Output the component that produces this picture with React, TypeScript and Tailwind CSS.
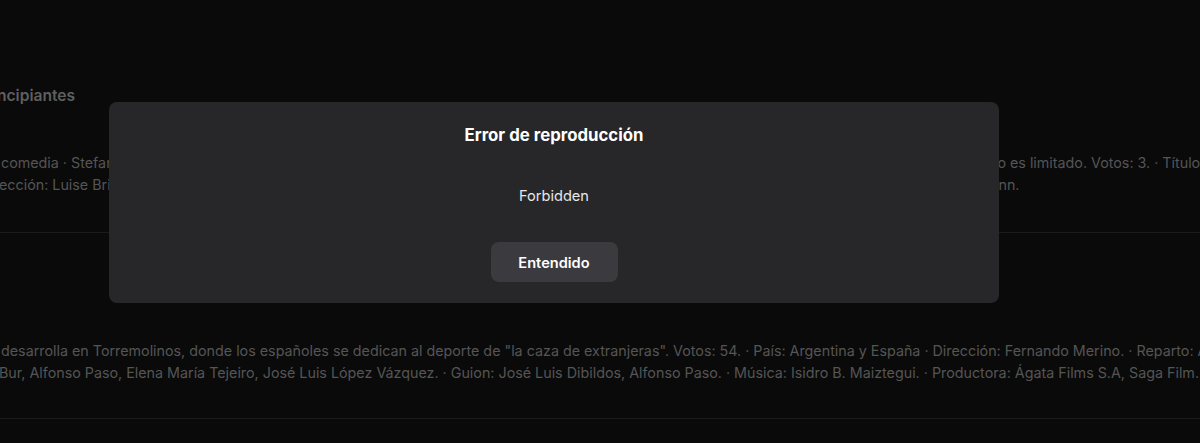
export default function App() {
  return (
    <div className="relative h-[443px] w-[1200px] overflow-hidden bg-[#0a0a0a] font-['Inter','Liberation_Sans',sans-serif]">
      {/* contenido de fondo, atenuado por el modal */}
      <div className="flex flex-col">
        <div className="border-b border-[#1b1b1b] pt-[84px] pb-[36px]">
          <h3 className="-ml-[3px] text-[15.6px] leading-6 font-semibold text-[#5f5f5f] whitespace-nowrap">
            ncipiantes
          </h3>
          <div className="mt-[44px] text-[14.3px] leading-[22px] text-[#555555] whitespace-nowrap">
            <p className="ml-[1px]">
              comedia · Stefanie Stappenbeck, Nele Kiper, Marc Benjamin. · Sinopsis: Un grupo de adultos decide aprender a nadar en la piscina local y el cupo no es limitado. Votos: 3. · Título original: Die Anfänger
            </p>
            <p className="-ml-[1px]">
              ección: Luise Brinkmann. · Guion: Luise Brinkmann, Roberto Krause. · Fotografía: Carol Burandt von Kameke. · Reparto: Ulrike Kriener, Luise Brinkmann.
            </p>
          </div>
        </div>
        <div className="border-b border-[#1b1b1b] pt-[107px] pb-[34px]">
          <div className="text-[14.3px] leading-[22px] text-[#555555] whitespace-nowrap">
            <p className="ml-[1px]">
              desarrolla en Torremolinos, donde los españoles se dedican al deporte de "la caza de extranjeras". Votos: 54. · País: Argentina y España · Dirección: Fernando Merino. · Reparto: Antonio Ozores
            </p>
            <p className="-ml-[1px]">
              Bur, Alfonso Paso, Elena María Tejeiro, José Luis López Vázquez. · Guion: José Luis Dibildos, Alfonso Paso. · Música: Isidro B. Maiztegui. · Productora: Ágata Films S.A, Saga Film.
            </p>
          </div>
        </div>
      </div>

      {/* modal de error */}
      <div className="absolute inset-0 flex items-start justify-start pt-[102px] pl-[109px]">
        <div className="flex h-[201px] w-[890px] flex-col items-center rounded-lg bg-[#27272a] pt-[21px] pb-[21px]">
          <h2 className="text-[16.8px] leading-6 font-bold text-white">Error de reproducción</h2>
          <p className="mt-[39px] text-[14.6px] leading-5 text-[#e8e8e8]">Forbidden</p>
          <button className="mt-[36px] h-10 w-[127px] rounded-lg bg-[#3a3a3f] pt-[3px] text-[14.6px] font-semibold text-white">
            Entendido
          </button>
        </div>
      </div>
    </div>
  );
}
